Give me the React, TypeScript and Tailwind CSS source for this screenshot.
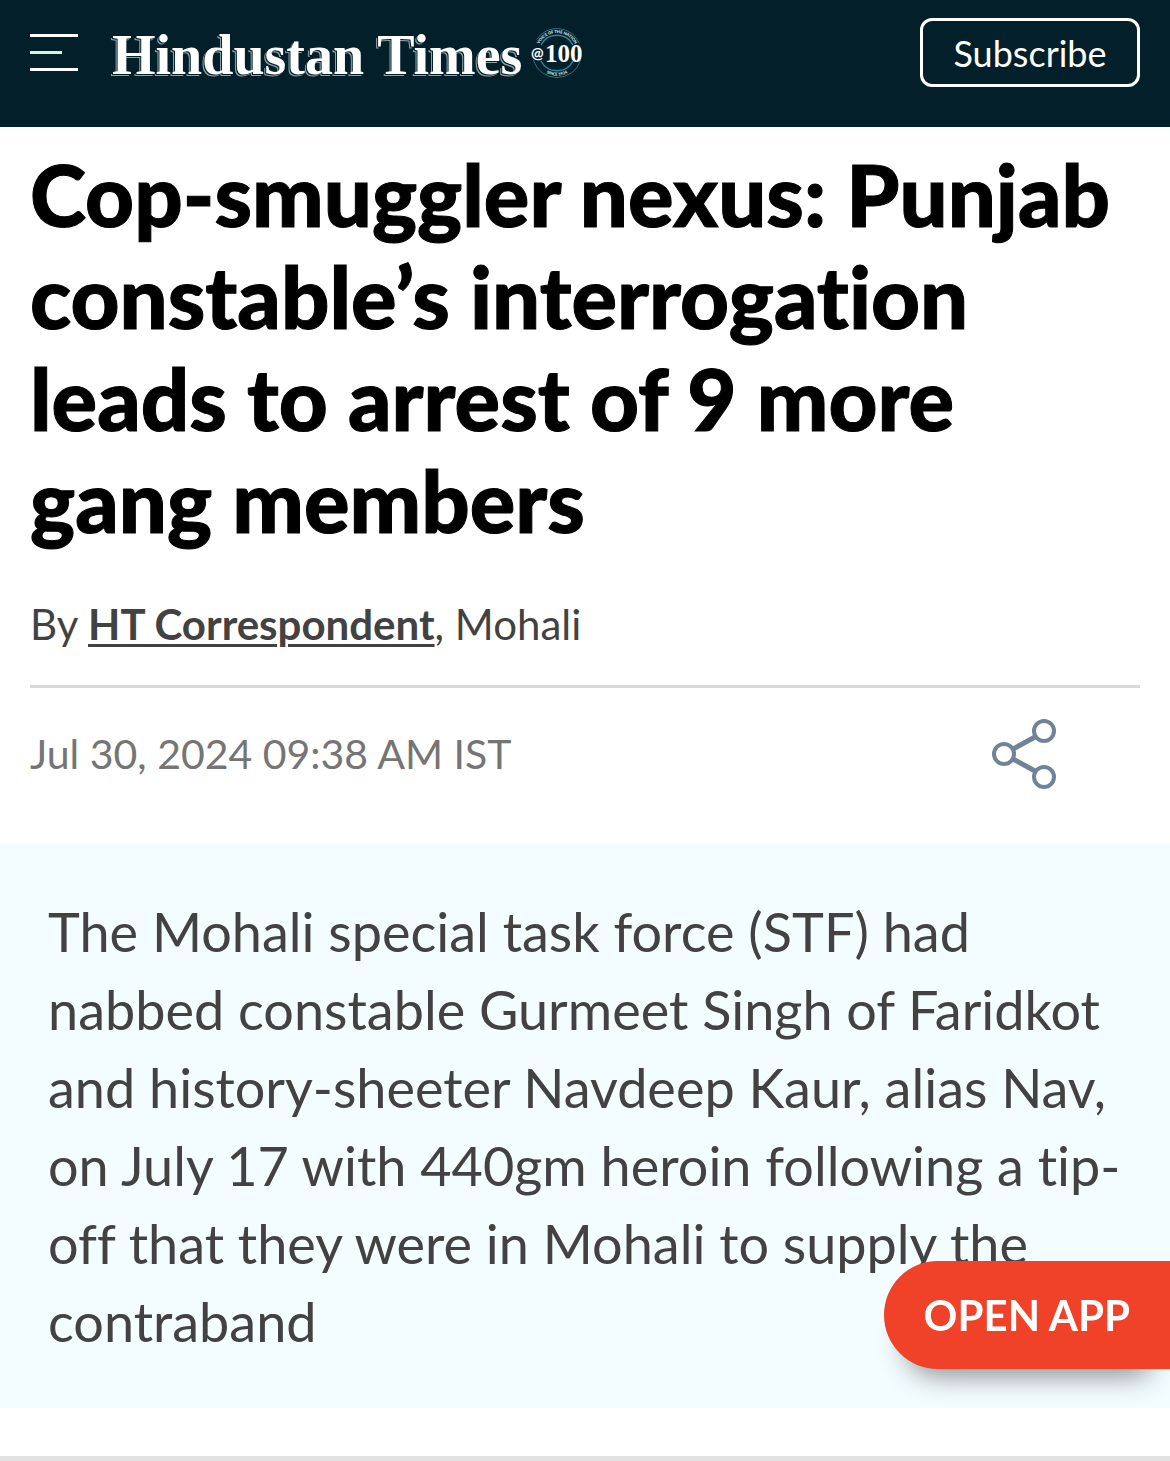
import type { ReactNode } from "react";

const menuLines = [
  { id: "top", className: "h-[3px] w-12 bg-white" },
  { id: "middle", className: "h-[3px] w-8 bg-[#d5f5ea]" },
  { id: "bottom", className: "h-[3px] w-12 bg-white" },
];

export default function App() {
  return (
    <div className="min-h-screen bg-white font-['Lato',sans-serif] text-[#424242] [font-variant-ligatures:none]">
      <Header />
      <main>
        <article>
          <div className="px-[30px] pt-4">
            <h1 className="text-[85px] leading-[102px] font-black text-black [-webkit-text-stroke:1px_black]">
              Cop-smuggler nexus: Punjab constable’s interrogation leads to arrest of 9 more gang members
            </h1>
            <p className="mt-[42px] border-b-[3px] border-[#d9d9d9] pb-[30px] text-[42px] leading-[62px]">
              By{" "}
              <a href="#author" className="font-bold underline decoration-[3px] underline-offset-4">
                HT Correspondent
              </a>
              , Mohali
            </p>
            <div className="flex items-center justify-between pt-4 pr-[83px] pb-10">
              <time dateTime="2024-07-30T09:38" className="text-[41px] text-[#757575]">
                Jul 30, 2024 09:38 AM IST
              </time>
              <button type="button" aria-label="Share" className="flex h-[100px] items-center">
                <ShareIcon />
              </button>
            </div>
          </div>
          <Summary>
            The Mohali special task force (STF) had nabbed constable Gurmeet Singh of Faridkot and
            history-sheeter Navdeep Kaur, alias Nav, on July 17 with 440gm heroin following a tip-off
            that they were in Mohali to supply the contraband
          </Summary>
        </article>
        <div className="mt-12 h-[5px] bg-[#e2e2e2]"></div>
      </main>

      {/* Floating app prompt */}
      <a
        href="#app"
        className="fixed right-0 bottom-[92px] flex h-[108px] items-center rounded-l-full bg-[#f04129] pr-10 pl-10 text-[42px] font-bold text-white shadow-[0_28px_28px_-22px_rgba(0,0,0,0.45)]"
      >
        OPEN APP
      </a>
    </div>
  );
}

function Header() {
  return (
    <header className="flex h-[127px] items-start justify-between bg-[#021f2a] px-[30px] pt-[18px]">
      <div className="flex h-[69px] items-center">
        <button type="button" aria-label="Menu" className="flex w-12 flex-col gap-[14px]">
          {menuLines.map((line) => (
            <span key={line.id} className={line.className}></span>
          ))}
        </button>
        <a href="#home" className="ml-[34px] flex items-center gap-2 text-white">
          <span className="pt-1 font-['Liberation_Serif',serif] text-[56px] leading-[64px] font-bold whitespace-nowrap [text-shadow:-1px_1px_0_#021f2a,-2px_2px_0_#8fa3aa]">
            Hindustan Times
          </span>
          <CentenaryBadge />
        </a>
      </div>
      <button
        type="button"
        className="h-[69px] w-[220px] rounded-xl border-[3px] border-white text-[36px] text-white"
      >
        Subscribe
      </button>
    </header>
  );
}

function Summary({ children }: { children: ReactNode }) {
  return (
    <section className="bg-[#f3fcff] px-12 pt-[49px] pb-[47px]">
      <h2 className="text-[54px] leading-[78px]">{children}</h2>
    </section>
  );
}

function CentenaryBadge() {
  return (
    <svg width="54" height="52" viewBox="0 0 54 52" role="img" aria-label="100 years">
      <defs>
        <path id="badge-top" d="M7 26a20 20 0 0 1 40 0" />
        <path id="badge-bottom" d="M4.500 26a22.500 22.500 0 0 0 45 0" />
      </defs>
      <g fill="none" stroke="#2c8ba0">
        <path d="M6.500 12.500a24.500 24.500 0 0 1 43 4" strokeWidth="0.8" />
        <path d="M3.500 33a24.500 24.500 0 0 0 47 0" strokeWidth="0.8" />
        <path d="M11 18a18 18 0 0 1 32 0" strokeWidth="1.400" />
        <path d="M11 34a18 18 0 0 0 32 0" strokeWidth="1.400" />
      </g>
      <g fill="#e3f0f3" fontFamily="Lato, sans-serif" fontWeight="900" fontSize="4">
        <text textAnchor="middle">
          <textPath href="#badge-top" startOffset="50%">VOICE OF THE NATION</textPath>
        </text>
        <text textAnchor="middle">
          <textPath href="#badge-bottom" startOffset="50%">SINCE 1924</textPath>
        </text>
      </g>
      <g fill="#fff" fontWeight="700">
        <text x="1" y="31" fontFamily="Lato, sans-serif" fontSize="15">@</text>
        <text x="15" y="35" fontFamily="Liberation Serif, serif" fontSize="25">100</text>
      </g>
    </svg>
  );
}

function ShareIcon() {
  return (
    <svg width="66" height="72" viewBox="0 0 66 72" fill="none" stroke="#718399" strokeWidth="4">
      <circle cx="13" cy="36" r="10" />
      <circle cx="53" cy="13" r="10" />
      <circle cx="53" cy="59" r="10" />
      <path d="M22 31l22-12M22 41l22 12" strokeWidth="5" />
    </svg>
  );
}
